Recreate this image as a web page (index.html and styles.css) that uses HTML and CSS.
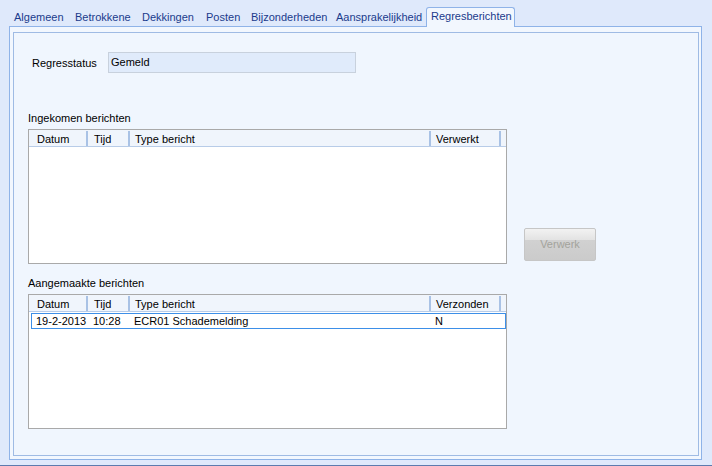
FILE: index.html
```html
<!DOCTYPE html>
<html>
<head>
<meta charset="utf-8">
<link rel="stylesheet" href="styles.css">
</head>
<body>
<div class="window">
  <div class="tabs">
    <div class="tab w1">Algemeen</div>
    <div class="tab w2">Betrokkene</div>
    <div class="tab w3">Dekkingen</div>
    <div class="tab w4">Posten</div>
    <div class="tab w5">Bijzonderheden</div>
    <div class="tab w6">Aansprakelijkheid</div>
    <div class="tab active">Regresberichten</div>
  </div>
  <div class="panel">
    <div class="inner">
      <div class="status-row">
        <div class="status-label">Regresstatus</div>
        <div class="status-input">Gemeld</div>
      </div>
      <div class="section-label first">Ingekomen berichten</div>
      <div class="list-row">
        <div class="list">
          <div class="list-head">
            <div class="hc c1">Datum</div>
            <div class="hc c2">Tijd</div>
            <div class="hc c3">Type bericht</div>
            <div class="hc c4">Verwerkt</div>
          </div>
        </div>
        <div class="button">Verwerk</div>
      </div>
      <div class="section-label">Aangemaakte berichten</div>
      <div class="list">
        <div class="list-head">
          <div class="hc c1">Datum</div>
          <div class="hc c2">Tijd</div>
          <div class="hc c3">Type bericht</div>
          <div class="hc c4">Verzonden</div>
        </div>
        <div class="row selected">
          <div class="rc r1">19-2-2013</div>
          <div class="rc r2">10:28</div>
          <div class="rc r3">ECR01 Schademelding</div>
          <div class="rc r4">N</div>
        </div>
      </div>
    </div>
  </div>
</div>
</body>
</html>
```
FILE: styles.css
```css
* { box-sizing: border-box; }
html, body { margin: 0; padding: 0; }
body {
  font-family: "Liberation Sans", Arial, sans-serif;
  font-size: 11px;
  color: #000;
  background: #dfe9fb;
}
.window {
  width: 712px;
  height: 466px;
  background: #dfe9fb;
  border-bottom: 1px solid #5d7bae;
  overflow: hidden;
}
.tabs {
  display: flex;
  align-items: flex-end;
  height: 26px;
  padding-left: 8px;
}
.tab {
  white-space: nowrap;
  color: #1b3b8c;
  height: 17px;
  line-height: 19px;
  padding-left: 6px;
  margin-bottom: 1px;
}
.w1 { width: 61px; }
.w2 { width: 67px; }
.w3 { width: 64px; }
.w4 { width: 45px; }
.w5 { width: 85px; }
.w6 { width: 96px; }
.tab.active {
  position: relative;
  z-index: 2;
  width: 89px;
  height: 20px;
  line-height: 17px;
  margin-bottom: -1px;
  padding-left: 4px;
  background: #f2f7fe;
  border: 1px solid #8fb3e8;
  border-bottom: none;
  border-radius: 3px 3px 0 0;
  color: #1b3b8c;
}
.panel {
  margin-left: 9px;
  width: 693px;
  height: 434px;
  border: 1px solid #8fb3e8;
  background: #f2f7fe;
  padding: 5px 2px 3px 3px;
}
.inner {
  width: 686px;
  height: 424px;
  border: 1px solid #9fbbe4;
  background: #f0f6fe;
  padding-left: 14px;
  display: flex;
  flex-direction: column;
  align-items: flex-start;
}
.status-row {
  display: flex;
  align-items: center;
  margin-top: 19px;
  margin-left: 4px;
  height: 21px;
}
.status-label {
  width: 76px;
  padding-top: 1px;
}
.status-input {
  width: 248px;
  height: 21px;
  line-height: 18px;
  padding-left: 2px;
  background: #e0ebfb;
  border: 1px solid #c8d1dd;
}
.section-label {
  height: 14px;
  line-height: 15px;
  margin-top: 12px;
}
.section-label.first { margin-top: 38px; }
.list-row {
  display: flex;
  margin-top: 4px;
}
.list {
  width: 479px;
  height: 135px;
  border: 1px solid #a9a9a9;
  background: #fff;
}
.section-label + .list { margin-top: 4px; }
.list-head {
  display: flex;
  height: 17px;
  background: #f0f5fc;
  border-bottom: 1px solid #b8cce8;
}
.hc {
  height: 15px;
  margin-top: 1px;
  line-height: 16px;
  border-right: 2px solid #a9c2e5;
  white-space: nowrap;
}
.c1 { width: 59px; padding-left: 8px; }
.c2 { width: 42px; padding-left: 6px; }
.c3 { width: 301px; padding-left: 5px; }
.c4 { width: 70px; padding-left: 5px; }
.row {
  display: flex;
  width: 475px;
  height: 16px;
  margin: 1px 0 0 2px;
  line-height: 15px;
  white-space: nowrap;
}
.row.selected { border: 1px solid #3d8fe8; }
.r1 { width: 56px; padding-left: 4px; }
.r2 { width: 42px; padding-left: 5px; }
.r3 { width: 301px; padding-left: 4px; }
.r4 { padding-left: 4px; }
.button {
  align-self: flex-end;
  margin: 0 0 3px 17px;
  width: 72px;
  height: 33px;
  line-height: 31px;
  text-align: center;
  color: #a3a39c;
  border: 1px solid #c6c6c6;
  border-radius: 2px;
  background: linear-gradient(#f2f2f2 0%, #e3e3e3 35%, #d1d1d1 36%, #cbcbcb 100%);
}
```
